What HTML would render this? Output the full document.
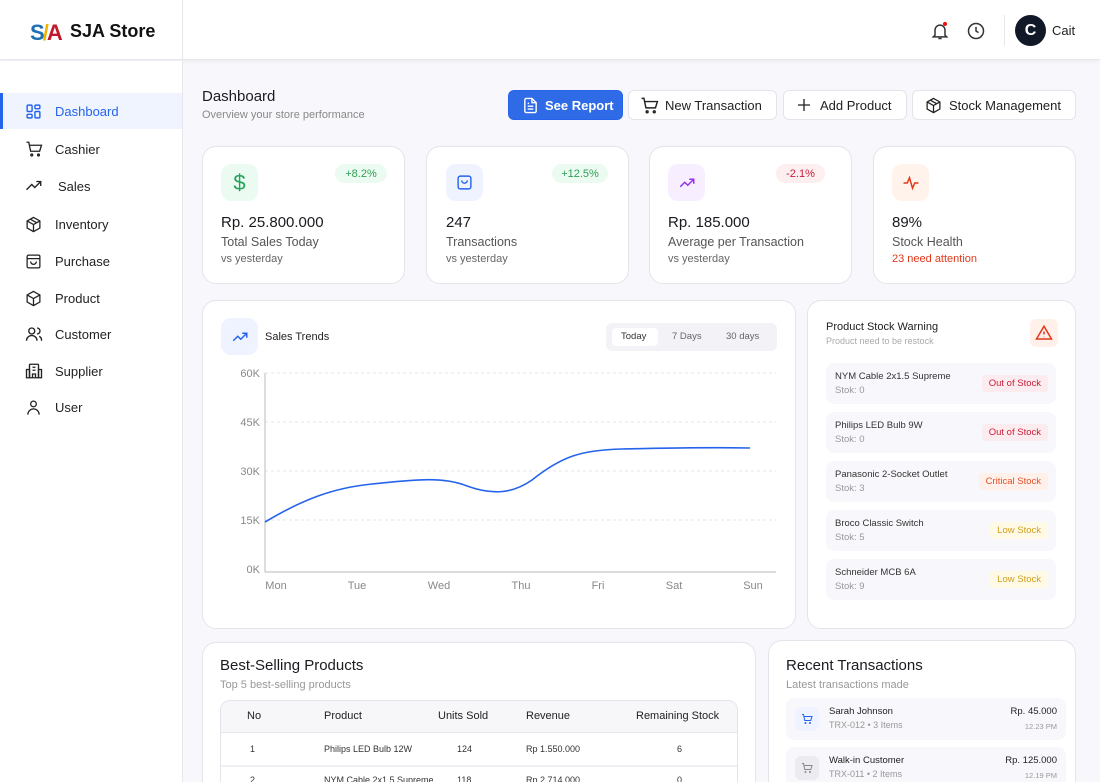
<!DOCTYPE html>
<html style="width:1100px;height:782px;overflow:hidden"><head><meta charset="utf-8">
<style>
*{box-sizing:border-box;margin:0;padding:0}
body{width:1100px;height:782px;overflow:hidden;background:#f8f8fc;font-family:"Liberation Sans",sans-serif;color:#1a1a1f;position:relative}
.abs{position:absolute}
.card{position:absolute;background:#fff;border:1px solid #e3e3ea;border-radius:14px}
svg{display:block}
.nav{position:absolute;left:0;width:182px;height:36px;display:flex;align-items:center;font-size:13px;color:#222}
.nav svg{position:absolute;left:25px}
.nav span{position:absolute;left:55px}
.btn{position:absolute;top:90px;height:30px;border:1px solid #e3e3ea;border-radius:6px;background:#fff;font-size:13px;display:flex;align-items:center;color:#222}
.ib{position:absolute;width:37px;height:37px;border-radius:10px;display:flex;align-items:center;justify-content:center}
.badge{position:absolute;top:164px;height:19px;border-radius:10px;font-size:11px;display:flex;align-items:center;justify-content:center}
.val{position:absolute;top:214px;font-size:15px;color:#1a1a1f}
.lbl{position:absolute;top:235px;font-size:12.5px;color:#555}
.sub{position:absolute;top:253px;font-size:11px;color:#666}
.wi{position:absolute;left:826px;width:230px;height:41px;background:#f8f8fc;border-radius:8px}
.wi .n{position:absolute;left:9px;top:8px;font-size:9.5px;color:#333}
.wi .s{position:absolute;left:9px;top:22px;font-size:9.5px;color:#999}
.wi .b{position:absolute;right:8px;top:12px;height:17px;padding:0 7px;font-size:9.5px;display:flex;align-items:center;border-radius:3px}
.ax{font-size:11px;fill:#888;font-family:"Liberation Sans",sans-serif}
</style></head><body>
<!-- header -->
<div class="abs" style="left:0;top:0;width:1100px;height:60px;background:#fff;border-bottom:1px solid #e6e6ec;box-shadow:0 2px 4px rgba(0,0,0,.04)"></div>
<div class="abs" style="left:182px;top:0;width:1px;height:782px;background:#e6e6ec"></div>
<div class="abs" style="left:30px;top:20px;font-size:22px;font-weight:bold;letter-spacing:-2px"><span style="color:#1f6fb4">S</span><span style="color:#f0b400">/</span><span style="color:#c0182c">A</span></div>
<div class="abs" style="left:70px;top:21px;font-size:18px;font-weight:bold;color:#111">SJA Store</div>
<svg class="abs" style="left:930px;top:21px" width="20" height="20" viewBox="0 0 24 24" fill="none" stroke="#333" stroke-width="1.8"><path d="M6 17V11a6 6 0 0 1 12 0v6l2 2H4z"/><path d="M10 21h4"/><circle cx="18" cy="3.5" r="2.5" fill="#e11" stroke="none"/></svg>
<svg class="abs" style="left:966px;top:21px" width="20" height="20" viewBox="0 0 24 24" fill="none" stroke="#333" stroke-width="1.8"><circle cx="12" cy="12" r="9"/><path d="M12 7v5l3 2"/></svg>
<div class="abs" style="left:1004px;top:15px;width:1px;height:31px;background:#e6e6ec"></div>
<div class="abs" style="left:1015px;top:15px;width:31px;height:31px;border-radius:50%;background:#111827;color:#fff;font-size:16px;font-weight:bold;display:flex;align-items:center;justify-content:center">C</div>
<div class="abs" style="left:1052px;top:23px;font-size:13px;color:#222">Cait</div>

<!-- sidebar -->
<div class="abs" style="left:0;top:61px;width:182px;height:721px;background:#fff"></div>
<div class="nav" style="top:93px;background:#eff4ff;color:#2563eb"><div class="abs" style="left:0;top:0;width:3px;height:36px;background:#2563eb"></div>
<svg width="17" height="17" viewBox="0 0 24 24" fill="none" stroke="#2563eb" stroke-width="2"><rect x="3" y="3" width="7" height="9" rx="1.5"/><rect x="14" y="3" width="7" height="5" rx="1.5"/><rect x="14" y="12" width="7" height="9" rx="1.5"/><rect x="3" y="16" width="7" height="5" rx="1.5"/></svg><span>Dashboard</span></div>
<div class="nav" style="top:131px"><svg width="18" height="18" viewBox="0 0 24 24" fill="none" stroke="#222" stroke-width="1.8"><path d="M2 3h3l2.5 12h12L22 7H6"/><circle cx="9" cy="20" r="1.2"/><circle cx="18" cy="20" r="1.2"/></svg><span>Cashier</span></div>
<div class="nav" style="top:168px"><svg width="18" height="18" viewBox="0 0 24 24" fill="none" stroke="#222" stroke-width="1.8"><path d="M2 17l7-7 4 4 8-8M15 6h6v6"/></svg><span style="left:58px">Sales</span></div>
<div class="nav" style="top:206px"><svg width="17" height="17" viewBox="0 0 24 24" fill="none" stroke="#222" stroke-width="1.8"><path d="M12 2l9 5v10l-9 5-9-5V7z"/><path d="M3 7l9 5 9-5M12 12v10M7.5 4.5l9 5"/></svg><span>Inventory</span></div>
<div class="nav" style="top:243px"><svg width="17" height="17" viewBox="0 0 24 24" fill="none" stroke="#222" stroke-width="1.8"><rect x="3" y="3" width="18" height="18" rx="2"/><path d="M3 8h18M8 12a4 4 0 0 0 8 0"/></svg><span>Purchase</span></div>
<div class="nav" style="top:280px"><svg width="17" height="17" viewBox="0 0 24 24" fill="none" stroke="#222" stroke-width="1.8"><path d="M12 2l9 5v10l-9 5-9-5V7z"/><path d="M3 7l9 5 9-5M12 12v10"/></svg><span>Product</span></div>
<div class="nav" style="top:316px"><svg width="18" height="18" viewBox="0 0 24 24" fill="none" stroke="#222" stroke-width="1.8"><circle cx="9" cy="8" r="4"/><path d="M2 21a7 7 0 0 1 14 0M16 4a4 4 0 0 1 0 8M19 15a6 6 0 0 1 3 6"/></svg><span>Customer</span></div>
<div class="nav" style="top:353px"><svg width="18" height="18" viewBox="0 0 24 24" fill="none" stroke="#222" stroke-width="1.8"><rect x="6" y="3" width="12" height="18" rx="1"/><path d="M2 10h4v11H2zM18 10h4v11h-4zM10 7h4M10 11h4M10 21v-5h4v5"/></svg><span>Supplier</span></div>
<div class="nav" style="top:389px"><svg width="17" height="17" viewBox="0 0 24 24" fill="none" stroke="#222" stroke-width="1.8"><circle cx="12" cy="7" r="4"/><path d="M4 22a8 8 0 0 1 16 0"/></svg><span>User</span></div>

<!-- title -->
<div class="abs" style="left:202px;top:88px;font-size:15px;color:#1a1a1f">Dashboard</div>
<div class="abs" style="left:202px;top:109px;font-size:11px;color:#888">Overview your store performance</div>

<div class="btn" style="left:508px;width:115px;background:#2f6be6;border-color:#2563eb;color:#fff;font-weight:bold"><svg class="abs" style="left:13px" width="17" height="17" viewBox="0 0 24 24" fill="none" stroke="#fff" stroke-width="2"><path d="M14 2H6a2 2 0 0 0-2 2v16a2 2 0 0 0 2 2h12a2 2 0 0 0 2-2V8z"/><path d="M14 2v6h6M8 13h8M8 17h8M8 9h2"/></svg><span class="abs" style="left:36px">See Report</span></div>
<div class="btn" style="left:628px;width:149px"><svg class="abs" style="left:11px" width="19" height="19" viewBox="0 0 24 24" fill="none" stroke="#222" stroke-width="1.8"><path d="M2 3h3l2.5 12h12L22 7H6"/><circle cx="9" cy="20" r="1.2"/><circle cx="18" cy="20" r="1.2"/></svg><span class="abs" style="left:36px">New Transaction</span></div>
<div class="btn" style="left:783px;width:124px"><svg class="abs" style="left:12px" width="16" height="16" viewBox="0 0 24 24" fill="none" stroke="#222" stroke-width="2"><path d="M12 3v18M3 12h18"/></svg><span class="abs" style="left:36px">Add Product</span></div>
<div class="btn" style="left:912px;width:164px"><svg class="abs" style="left:12px" width="17" height="17" viewBox="0 0 24 24" fill="none" stroke="#222" stroke-width="1.8"><path d="M12 2l9 5v10l-9 5-9-5V7z"/><path d="M3 7l9 5 9-5M12 12v10M7.5 4.5l9 5"/></svg><span class="abs" style="left:36px">Stock Management</span></div>

<!-- stat cards -->
<div class="card" style="left:202px;top:146px;width:203px;height:138px"></div>
<div class="card" style="left:426px;top:146px;width:203px;height:138px"></div>
<div class="card" style="left:649px;top:146px;width:203px;height:138px"></div>
<div class="card" style="left:873px;top:146px;width:203px;height:138px"></div>

<div class="ib" style="left:221px;top:164px;background:#ecfbf1;color:#22a35a;font-size:22px">$</div>
<div class="badge" style="left:335px;width:52px;background:#ecfbf1;color:#2f9e55">+8.2%</div>
<div class="val" style="left:221px">Rp. 25.800.000</div><div class="lbl" style="left:221px">Total Sales Today</div><div class="sub" style="left:221px">vs yesterday</div>

<div class="ib" style="left:446px;top:164px;background:#eef3ff"><svg width="17" height="17" viewBox="0 0 24 24" fill="none" stroke="#2563eb" stroke-width="2"><rect x="3" y="3" width="18" height="18" rx="3"/><path d="M8 9a4 4 0 0 0 8 0"/></svg></div>
<div class="badge" style="left:552px;width:56px;background:#ecfbf1;color:#2f9e55">+12.5%</div>
<div class="val" style="left:446px">247</div><div class="lbl" style="left:446px">Transactions</div><div class="sub" style="left:446px">vs yesterday</div>

<div class="ib" style="left:668px;top:164px;background:#f7efff"><svg width="18" height="18" viewBox="0 0 24 24" fill="none" stroke="#9333ea" stroke-width="2"><path d="M3 17l6-6 4 4 8-8M15 7h6v6"/></svg></div>
<div class="badge" style="left:776px;width:49px;background:#fdeef0;color:#c81e3a">-2.1%</div>
<div class="val" style="left:668px">Rp. 185.000</div><div class="lbl" style="left:668px">Average per Transaction</div><div class="sub" style="left:668px">vs yesterday</div>

<div class="ib" style="left:892px;top:164px;background:#fff3ec"><svg width="18" height="18" viewBox="0 0 24 24" fill="none" stroke="#e2381b" stroke-width="2"><path d="M2 12h5l3-7 4 14 3-7h5"/></svg></div>
<div class="val" style="left:892px">89%</div><div class="lbl" style="left:892px">Stock Health</div><div class="sub" style="left:892px;color:#e2381b">23 need attention</div>

<!-- chart -->
<div class="card" style="left:202px;top:300px;width:594px;height:329px"></div>
<div class="ib" style="left:221px;top:318px;background:#eef3ff"><svg width="18" height="18" viewBox="0 0 24 24" fill="none" stroke="#2563eb" stroke-width="2"><path d="M3 17l6-6 4 4 8-8M15 7h6v6"/></svg></div>
<div class="abs" style="left:265px;top:331px;font-size:11px;color:#222">Sales Trends</div>
<div class="abs" style="left:606px;top:323px;width:171px;height:28px;background:#f3f3f7;border-radius:6px"></div>
<div class="abs" style="left:612px;top:328px;width:46px;height:18px;background:#fff;border-radius:4px"></div>
<div class="abs" style="left:621px;top:331px;font-size:9.5px;color:#333">Today</div>
<div class="abs" style="left:672px;top:331px;font-size:9.5px;color:#666">7 Days</div>
<div class="abs" style="left:726px;top:331px;font-size:9.5px;color:#666">30 days</div>
<svg class="abs" style="left:202px;top:360px" width="594" height="240">
<g stroke="#e6e6ec" stroke-dasharray="3 3"><line x1="63" y1="13" x2="574" y2="13"/><line x1="63" y1="62" x2="574" y2="62"/><line x1="63" y1="111" x2="574" y2="111"/><line x1="63" y1="160" x2="574" y2="160"/></g>
<line x1="63" y1="13" x2="63" y2="212" stroke="#bbb"/><line x1="63" y1="212" x2="574" y2="212" stroke="#bbb"/>
<g class="ax" text-anchor="end"><text x="58" y="17">60K</text><text x="58" y="66">45K</text><text x="58" y="115">30K</text><text x="58" y="164">15K</text><text x="58" y="213">0K</text></g>
<g class="ax" text-anchor="middle"><text x="74" y="229">Mon</text><text x="155" y="229">Tue</text><text x="237" y="229">Wed</text><text x="319" y="229">Thu</text><text x="396" y="229">Fri</text><text x="472" y="229">Sat</text><text x="551" y="229">Sun</text></g>
<path d="M63 162 C100 140,130 128,170 124 C210 120,240 116,265 126 C290 135,310 134,330 120 C360 96,380 90,420 89 C470 88,500 87,548 88" fill="none" stroke="#2563eb" stroke-width="1.6"/>
</svg>

<!-- warning -->
<div class="card" style="left:807px;top:300px;width:269px;height:329px"></div>
<div class="abs" style="left:826px;top:321px;font-size:11px;color:#222">Product Stock Warning</div>
<div class="abs" style="left:826px;top:336px;font-size:9px;color:#aaa">Product need to be restock</div>
<div class="abs" style="left:1030px;top:319px;width:28px;height:28px;background:#fff1ea;border-radius:6px;display:flex;align-items:center;justify-content:center"><svg width="18" height="18" viewBox="0 0 24 24" fill="none" stroke="#e2381b" stroke-width="2"><path d="M12 3L2 20h20z"/><path d="M12 10v4M12 17v.5"/></svg></div>
<div class="wi" style="top:363px"><div class="n">NYM Cable 2x1.5 Supreme</div><div class="s">Stok: 0</div><div class="b" style="background:#fdecef;color:#c81e3a">Out of Stock</div></div>
<div class="wi" style="top:412px"><div class="n">Philips LED Bulb 9W</div><div class="s">Stok: 0</div><div class="b" style="background:#fdecef;color:#c81e3a">Out of Stock</div></div>
<div class="wi" style="top:461px"><div class="n">Panasonic 2-Socket Outlet</div><div class="s">Stok: 3</div><div class="b" style="background:#fff1ea;color:#e2502b">Critical Stock</div></div>
<div class="wi" style="top:510px"><div class="n">Broco Classic Switch</div><div class="s">Stok: 5</div><div class="b" style="background:#fffae6;color:#d1a020">Low Stock</div></div>
<div class="wi" style="top:559px"><div class="n">Schneider MCB 6A</div><div class="s">Stok: 9</div><div class="b" style="background:#fffae6;color:#d1a020">Low Stock</div></div>

<!-- best selling -->
<div class="card" style="left:202px;top:642px;width:554px;height:160px"></div>
<div class="abs" style="left:220px;top:657px;font-size:15px;color:#1a1a1f">Best-Selling Products</div>
<div class="abs" style="left:220px;top:679px;font-size:11px;color:#999">Top 5 best-selling products</div>
<div class="abs" style="left:220px;top:700px;width:518px;height:100px;border:1px solid #e3e3ea;border-radius:10px;overflow:hidden">
<div class="abs" style="left:0;top:0;width:518px;height:32px;background:#f7f7fa;border-bottom:1px solid #e6e6ec"></div>
<div class="abs" style="left:0;top:64px;width:518px;height:2px;background:#f0f0f4"></div>
</div>
<div class="abs" style="top:710px;left:247px;font-size:11px;color:#222">No</div>
<div class="abs" style="top:710px;left:324px;font-size:11px;color:#222">Product</div>
<div class="abs" style="top:710px;left:438px;font-size:11px;color:#222">Units Sold</div>
<div class="abs" style="top:710px;left:526px;font-size:11px;color:#222">Revenue</div>
<div class="abs" style="top:710px;left:636px;font-size:11px;color:#222">Remaining Stock</div>
<div class="abs" style="top:744px;left:250px;font-size:9px;color:#333">1</div>
<div class="abs" style="top:744px;left:324px;font-size:9px;color:#333">Philips LED Bulb 12W</div>
<div class="abs" style="top:744px;left:457px;font-size:9px;color:#333">124</div>
<div class="abs" style="top:744px;left:526px;font-size:9px;color:#333">Rp 1.550.000</div>
<div class="abs" style="top:744px;left:677px;font-size:9px;color:#333">6</div>
<div class="abs" style="top:775px;left:250px;font-size:9px;color:#333">2</div>
<div class="abs" style="top:775px;left:324px;font-size:9px;color:#333">NYM Cable 2x1.5 Supreme</div>
<div class="abs" style="top:775px;left:457px;font-size:9px;color:#333">118</div>
<div class="abs" style="top:775px;left:526px;font-size:9px;color:#333">Rp 2.714.000</div>
<div class="abs" style="top:775px;left:677px;font-size:9px;color:#333">0</div>

<!-- recent -->
<div class="card" style="left:768px;top:640px;width:308px;height:160px"></div>
<div class="abs" style="left:786px;top:657px;font-size:15px;color:#1a1a1f">Recent Transactions</div>
<div class="abs" style="left:786px;top:679px;font-size:11px;color:#999">Latest transactions made</div>
<div class="abs" style="left:786px;top:698px;width:280px;height:42px;background:#f8f8fc;border-radius:8px"></div>
<div class="abs" style="left:795px;top:707px;width:24px;height:24px;background:#eef3ff;border-radius:6px;display:flex;align-items:center;justify-content:center"><svg width="12" height="12" viewBox="0 0 24 24" fill="none" stroke="#2563eb" stroke-width="2"><path d="M2 3h3l2.5 12h12L22 7H6"/><circle cx="9" cy="20" r="1"/><circle cx="18" cy="20" r="1"/></svg></div>
<div class="abs" style="left:829px;top:706px;font-size:9.5px;color:#222">Sarah Johnson</div>
<div class="abs" style="left:829px;top:720px;font-size:9px;color:#999">TRX-012 • 3 Items</div>
<div class="abs" style="right:43px;top:706px;font-size:9.5px;color:#222">Rp. 45.000</div>
<div class="abs" style="right:43px;top:722px;font-size:7.5px;color:#999">12.23 PM</div>
<div class="abs" style="left:786px;top:747px;width:280px;height:42px;background:#f8f8fc;border-radius:8px"></div>
<div class="abs" style="left:795px;top:756px;width:24px;height:24px;background:#ececf0;border-radius:6px;display:flex;align-items:center;justify-content:center"><svg width="12" height="12" viewBox="0 0 24 24" fill="none" stroke="#888" stroke-width="2"><path d="M2 3h3l2.5 12h12L22 7H6"/><circle cx="9" cy="20" r="1"/><circle cx="18" cy="20" r="1"/></svg></div>
<div class="abs" style="left:829px;top:755px;font-size:9.5px;color:#222">Walk-in Customer</div>
<div class="abs" style="left:829px;top:769px;font-size:9px;color:#999">TRX-011 • 2 Items</div>
<div class="abs" style="right:43px;top:755px;font-size:9.5px;color:#222">Rp. 125.000</div>
<div class="abs" style="right:43px;top:771px;font-size:7.5px;color:#999">12.19 PM</div>
</body></html>
